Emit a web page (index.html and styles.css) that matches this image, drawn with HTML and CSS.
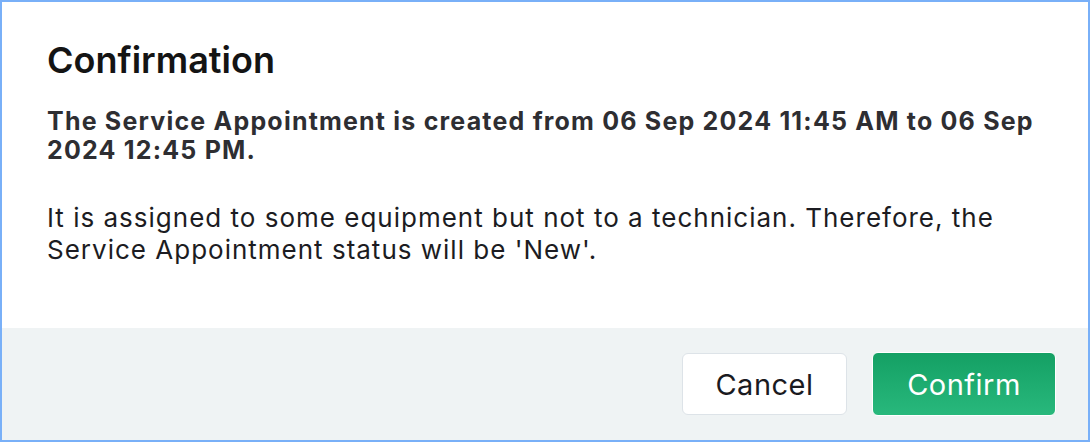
FILE: index.html
```html
<!DOCTYPE html>
<html lang="en">
<head>
  <meta charset="UTF-8" />
  <title>Confirmation</title>
  <link rel="stylesheet" href="styles.css">
</head>
<body>
  <div class="dialog">
    <div class="dialog-body">
      <h1 class="dialog-title">Confirmation</h1>
      <p class="summary">The Service Appointment is created from 06 Sep 2024 11:45 AM to 06 Sep 2024 12:45 PM.</p>
      <p class="note">It is assigned to some equipment but not to a technician. Therefore, the Service Appointment status will be 'New'.</p>
    </div>
    <div class="dialog-footer">
      <button class="btn btn-cancel">Cancel</button>
      <button class="btn btn-confirm">Confirm</button>
    </div>
  </div>
</body>
</html>
```

FILE: styles.css
```css
:root {
  --border-blue: #79b0f8;
  --footer-bg: #eff3f4;
  --text-dark: #1c1c22;
  --green: #1ea566;
}
* {
  box-sizing: border-box;
}
body {
  margin: 0;
  font-family: Inter, "Noto Sans", sans-serif;
  color: var(--text-dark);
  background: #fff;
}
.dialog {
  width: 1090px;
  height: 442px;
  border: 2px solid var(--border-blue);
  display: flex;
  flex-direction: column;
  background: #fff;
}
.dialog-body {
  flex: 1;
  padding: 36px 45px 0;
}
.dialog-title {
  margin: 0;
  font-size: 36px;
  line-height: 44px;
  font-weight: 600;
  color: #141414;
}
.summary {
  margin: 25px 0 0;
  font-size: 25px;
  font-weight: 700;
  line-height: 29px;
  letter-spacing: 1.2px;
  color: #2e2e32;
}
.note {
  margin: 37px 0 0;
  font-size: 26px;
  line-height: 32px;
  letter-spacing: 1px;
  font-weight: 400;
}
.dialog-footer {
  height: 112px;
  background: var(--footer-bg);
  display: flex;
  justify-content: flex-end;
  align-items: center;
  gap: 25px;
  padding: 0 32px 0 0;
}
.btn {
  font-family: inherit;
  font-size: 29px;
  letter-spacing: 0.5px;
  border-radius: 6px;
  cursor: pointer;
}
.btn-cancel {
  width: 165px;
  height: 62px;
  background: #fff;
  border: 1px solid #dde3e8;
  color: #1a1a1f;
}
.btn-confirm {
  width: 184px;
  height: 64px;
  border: 1px solid #fff;
  color: #fff;
  background: linear-gradient(#14a064, #28b87c);
}
```
